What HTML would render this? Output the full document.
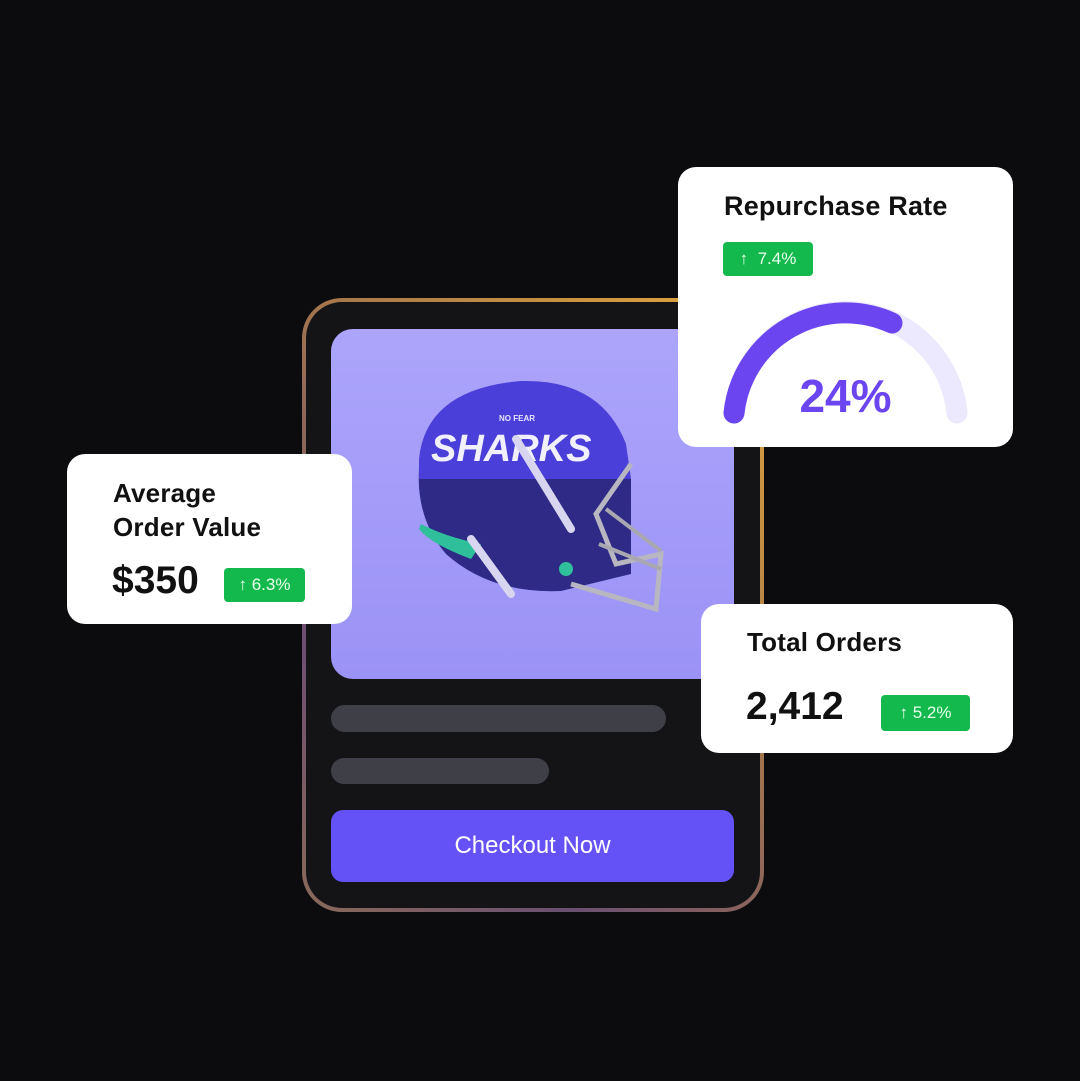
<!DOCTYPE html>
<html><head><meta charset="utf-8"><style>
*{margin:0;padding:0;box-sizing:border-box}
body{width:1080px;height:1081px;background:#0c0c0f;position:relative;overflow:hidden;font-family:"Liberation Sans","DejaVu Sans",sans-serif}
.abs{position:absolute}
.frame{left:302px;top:298px;width:462px;height:614px;border-radius:40px;padding:4px;background:linear-gradient(225deg,#e6a93a 0%,#a8784a 40%,#6b4f70 75%,#8a6a5a 100%)}
.inner{width:100%;height:100%;border-radius:36px;background:#141417}
.img{left:331px;top:329px;width:403px;height:350px;border-radius:22px;background:linear-gradient(180deg,#aca5fb,#9b92f6);overflow:hidden}
.bar{background:#3f4047;border-radius:14px}
.btn{left:331px;top:810px;width:403px;height:72px;border-radius:12px;background:#6552f6;color:#fff;font-size:24px;text-align:center;line-height:72px}
.card{background:#fff;border-radius:18px}
.t{color:#111;font-weight:700;font-size:26px;letter-spacing:0.2px}
.num{color:#111;font-size:39px;font-weight:700}
.badge{background:#13b94c;color:#e8ffee;border-radius:4px;font-size:17px;text-align:center}
</style></head><body>
<div class="abs frame"><div class="inner"></div></div>
<div class="abs img">
<svg width="403" height="350" viewBox="0 0 403 350">
 <path d="M88 130 Q95 60 190 52 Q270 50 295 115 L300 150 L220 160 L88 160 Z" fill="#4a3fd8"/>
 <path d="M88 140 Q85 190 115 225 Q160 265 230 262 L300 245 L300 150 L88 150 Z" fill="#2e2a85"/>
 <path d="M88 200 Q100 215 140 230 L150 215 Q115 208 90 195 Z" fill="#2fbf9a"/>
 <text x="100" y="132" font-family="Liberation Sans" font-weight="700" font-size="38" fill="#f1f0ff" font-style="italic">SHARKS</text>
 <text x="168" y="92" font-family="Liberation Sans" font-weight="700" font-size="8" fill="#e8e6ff">NO FEAR</text>
 <path d="M185 110 L240 200 M140 210 L180 265" stroke="#d8d5f0" stroke-width="8" stroke-linecap="round"/>
 <path d="M300 135 L265 185 L285 235 L330 225 L325 280 L240 255" fill="none" stroke="#b8b6c0" stroke-width="5"/>
 <path d="M275 180 L330 222 M268 215 L330 240" stroke="#a9a7b0" stroke-width="4"/>
 <circle cx="235" cy="240" r="7" fill="#2fbf9a"/>
</svg>
</div>
<div class="abs bar" style="left:331px;top:705px;width:335px;height:27px"></div>
<div class="abs bar" style="left:331px;top:758px;width:218px;height:26px"></div>
<div class="abs btn">Checkout Now</div>

<div class="abs card" style="left:678px;top:167px;width:335px;height:280px">
 <div class="abs t" style="left:46px;top:24px;font-size:27px">Repurchase Rate</div>
 <div class="abs badge" style="left:45px;top:75px;width:90px;height:34px;line-height:34px">↑&nbsp; 7.4%</div>
 <svg class="abs" style="left:0;top:0" width="335" height="280">
  <path d="M56 246 A112 112 0 0 1 279 246" fill="none" stroke="#ece8fd" stroke-width="21" stroke-linecap="round"/>
  <path d="M56 246 A112 112 0 0 1 214 156" fill="none" stroke="#6a45f0" stroke-width="21" stroke-linecap="round"/>
 </svg>
 <div class="abs" style="left:0;width:335px;top:202px;text-align:center;color:#6a45f0;font-size:46px;font-weight:700">24%</div>
</div>

<div class="abs card" style="left:67px;top:454px;width:285px;height:170px">
 <div class="abs t" style="left:46px;top:22px;line-height:34px">Average<br>Order Value</div>
 <div class="abs num" style="left:45px;top:105px">$350</div>
 <div class="abs badge" style="left:157px;top:114px;width:81px;height:34px;line-height:34px">↑ 6.3%</div>
</div>

<div class="abs card" style="left:701px;top:604px;width:312px;height:149px">
 <div class="abs t" style="left:46px;top:23px">Total Orders</div>
 <div class="abs num" style="left:45px;top:81px">2,412</div>
 <div class="abs badge" style="left:180px;top:91px;width:89px;height:36px;line-height:36px">↑ 5.2%</div>
</div>
</body></html>
